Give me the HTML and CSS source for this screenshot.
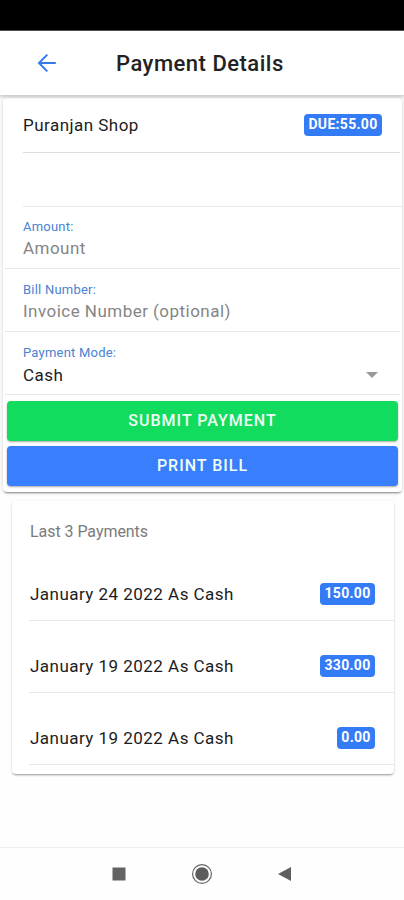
FILE: index.html
```
<!DOCTYPE html>
<html lang="en">
<head>
<meta charset="utf-8">
<title>Payment Details</title>
<link rel="stylesheet" href="styles.css">
</head>
<body>
<div class="status"></div>
<header class="header">
  <svg class="back" width="20" height="20" viewBox="0 0 20 20" fill="none" stroke="#347bea" stroke-width="2"><path d="M10.3 1.6 2 10l8.300 8.400M2.200 10H18.800"/></svg>
  <h1 class="title">Payment Details</h1>
</header>
<main class="content">
  <section class="card form">
    <div class="item shop"><span class="name">Puranjan Shop</span><span class="badge due">DUE:55.00</span></div>
    <div class="item blank"></div>
    <div class="field amount"><span class="label">Amount:</span><span class="value hint">Amount</span></div>
    <div class="field bill"><span class="label">Bill Number:</span><span class="value hint">Invoice Number (optional)</span></div>
    <div class="field mode"><span class="label">Payment Mode:</span><span class="value"><span>Cash</span><i class="caret"></i></span></div>
    <div class="buttons">
      <button class="btn submit"><span>SUBMIT PAYMENT</span></button>
      <button class="btn print"><span>PRINT BILL</span></button>
    </div>
  </section>
  <section class="card history">
    <h2 class="subtitle"><span>Last 3 Payments</span></h2>
    <div class="row"><span class="date">January 24 2022 As Cash</span><span class="badge">150.00</span></div>
    <div class="row"><span class="date">January 19 2022 As Cash</span><span class="badge">330.00</span></div>
    <div class="row"><span class="date">January 19 2022 As Cash</span><span class="badge small">0.00</span></div>
  </section>
</main>
<nav class="nav">
  <svg width="22" height="22" viewBox="0 0 22 22"><path d="M4.500 4.500h13v13h-13z" fill="#636363"/></svg>
  <svg width="22" height="22" viewBox="0 0 22 22"><circle cx="11" cy="11" r="9.400" fill="none" stroke="#666" stroke-width="1.200"/><circle cx="11" cy="11" r="6.800" fill="#5c5c5c"/></svg>
  <svg width="22" height="22" viewBox="0 0 22 22"><path d="M4 11 17 4v14z" fill="#5e5e5e"/></svg>
</nav>
</body>
</html>
```
FILE: styles.css
```
* { box-sizing: border-box; }
body {
  margin: 0;
  height: 900px;
  display: flex;
  flex-direction: column;
  background: #fefefe;
  color: #1c1c1c;
  font-family: Roboto, "Liberation Sans", sans-serif;
  overflow: hidden;
}
.status { height: 31px; background: #000; border-bottom: 1px solid #555; }
.header {
  height: 64px;
  display: flex;
  align-items: center;
  padding-left: 37px;
  background: #fff;
  box-shadow: 0 1px 3px 1px rgba(0, 0, 0, .2);
  z-index: 1;
}
.back { margin-right: 59px; }
.title { margin: 0; font-size: 22px; font-weight: 500; letter-spacing: .5px; white-space: nowrap; color: #222; }
.content { flex: 1; padding: 3px 2px 0 3px; }
.card { background: #fff; border-radius: 4px; }
.form {
  height: 394px;
  box-shadow: 0 2px 2px -1px rgba(0, 0, 0, .45), 0 0 4px 1px rgba(0, 0, 0, .1);
}
.item {
  display: flex;
  justify-content: space-between;
  align-items: center;
  margin: 0 2px 0 20px;
  border-bottom: 1px solid #dedede;
}
.shop { height: 55px; padding-right: 18px; }
.blank { height: 54px; border-color: #e8e8e8; margin-right: 0; }
.name { font-size: 17px; letter-spacing: .47px; }
.badge {
  display: flex;
  justify-content: center;
  width: 55px;
  height: 22px;
  border-radius: 4px;
  background: #347bf6;
  color: #fff;
  font-size: 14px;
  font-weight: 700;
  line-height: 21px;
  letter-spacing: .3px;
}
.due { width: 78px; }
.small { width: 38px; }
.field {
  display: flex;
  flex-direction: column;
  margin: 0 2px;
  padding: 12px 24px 0 18px;
  border-bottom: 1px solid #e8e8e8;
}
.amount { height: 62px; }
.bill, .mode { height: 63px; }
.bill { padding-top: 13px; }
.mode { padding-top: 13px; padding-right: 22px; }
.label { align-self: flex-start; font-size: 13px; line-height: 16px; letter-spacing: .22px; color: #4a83d2; }
.value { display: flex; justify-content: space-between; align-items: center; font-size: 17px; line-height: 20px; margin-top: 4px; letter-spacing: .47px; }
.hint { align-self: flex-start; margin-top: 3px; color: #858585; }
.caret { border: 6px solid transparent; border-top-color: #999; border-bottom: 0; }
.buttons { display: flex; flex-direction: column; gap: 5px; padding: 6px 4px 0; }
.btn {
  height: 40px;
  border: 0;
  padding: 0;
  border-radius: 4px;
  color: #f0fff5;
  font: 500 16px/38px Roboto, sans-serif;
  letter-spacing: 1px;
  box-shadow: 0 1px 2px rgba(0, 0, 0, .35);
}
.submit { background: #12dc5d; }
.print { background: #397efc; }
.history {
  height: 273px;
  margin: 9px 8px 0 9px;
  padding-left: 17px;
  box-shadow: 0 2px 2px -1px rgba(0, 0, 0, .3), 0 1px 3px rgba(0, 0, 0, .16);
}
.subtitle { margin: 0; height: 48px; padding: 21px 0 0 1px; font-size: 16px; line-height: 20px; font-weight: 400; color: #7b7b7b; letter-spacing: -.05px; }
.row {
  display: flex;
  justify-content: space-between;
  align-items: flex-end;
  height: 72px;
  padding: 0 19px 15px 1px;
  border-bottom: 1px solid #e8e8e8;
}
.date { font-size: 17px; line-height: 20px; letter-spacing: .47px; margin-bottom: 1px; }
.nav {
  height: 53px;
  display: flex;
  justify-content: center;
  align-items: center;
  gap: 61px;
  border-top: 1px solid #eee;
}
```
